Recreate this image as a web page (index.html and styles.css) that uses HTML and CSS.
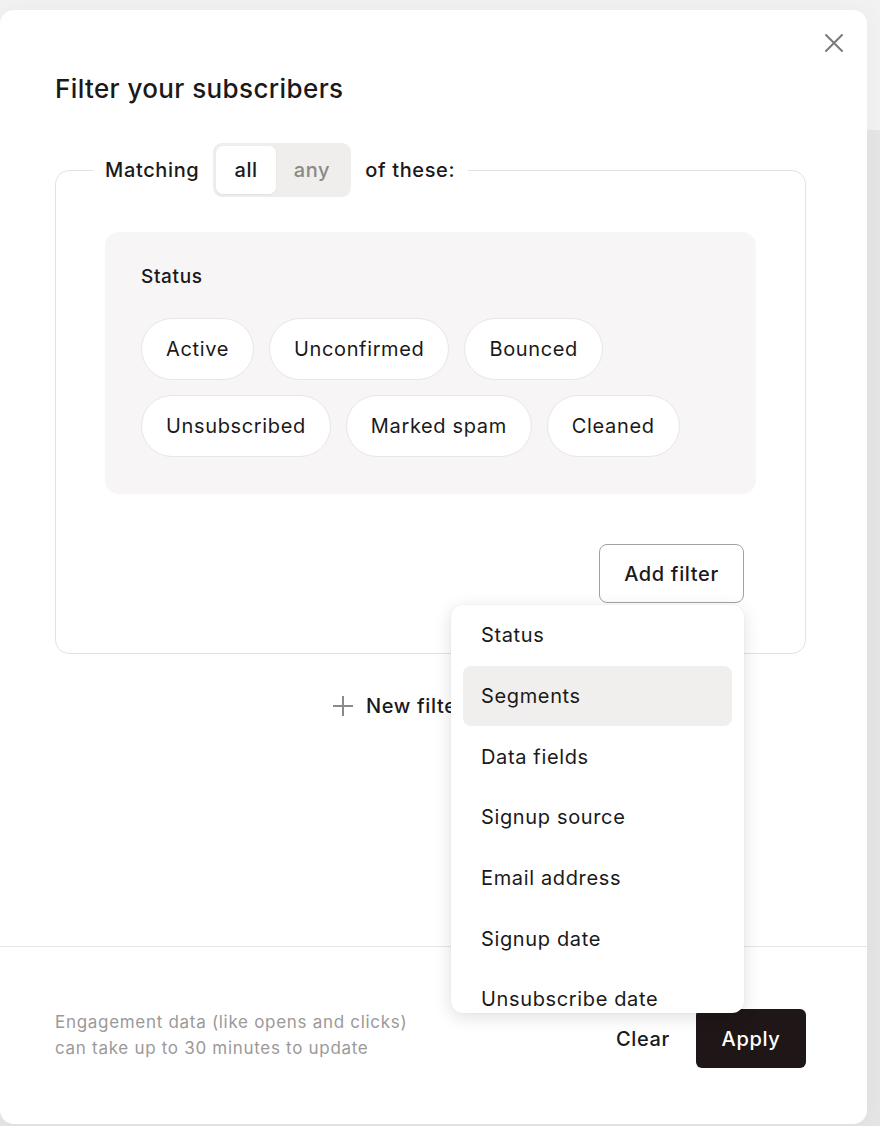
FILE: index.html
```html
<!DOCTYPE html>
<html lang="en">
<head>
<meta charset="utf-8">
<title>Filter your subscribers</title>
<link rel="stylesheet" href="styles.css">
</head>
<body>
<div class="modal">
  <div class="topbar">
    <button class="close" aria-label="Close">
      <svg width="20" height="20" viewBox="0 0 20 20"><path d="M2 2 L18 18 M18 2 L2 18" stroke="#7a7a7a" stroke-width="2" fill="none" stroke-linecap="round"/></svg>
    </button>
  </div>
  <div class="modal-body">
    <h1 class="title">Filter your subscribers</h1>
    <fieldset class="group">
      <legend class="group-legend">
        <span>Matching</span>
        <span class="toggle"><span class="seg seg-on">all</span><span class="seg">any</span></span>
        <span>of these:</span>
      </legend>
      <div class="filter-card">
        <div class="filter-label">Status</div>
        <div class="pills">
          <span class="pill">Active</span>
          <span class="pill">Unconfirmed</span>
          <span class="pill">Bounced</span>
          <span class="pill">Unsubscribed</span>
          <span class="pill">Marked spam</span>
          <span class="pill">Cleaned</span>
        </div>
      </div>
      <div class="add-row">
        <div class="add-wrap">
          <button class="add-btn">Add filter</button>
          <div class="menu">
            <div class="menu-item">Status</div>
            <div class="menu-item menu-item-on">Segments</div>
            <div class="menu-item">Data fields</div>
            <div class="menu-item">Signup source</div>
            <div class="menu-item">Email address</div>
            <div class="menu-item">Signup date</div>
            <div class="menu-item">Unsubscribe date</div>
          </div>
        </div>
      </div>
    </fieldset>
    <div class="new-filter">
      <svg width="22" height="22" viewBox="0 0 22 22"><path d="M11 1 V21 M1 11 H21" stroke="#8a8a8a" stroke-width="2" fill="none"/></svg>
      <span>New filter</span>
    </div>
  </div>
  <div class="modal-footer">
    <p class="note">Engagement data (like opens and clicks)<br>can take up to 30 minutes to update</p>
    <div class="actions">
      <button class="clear-btn">Clear</button>
      <button class="apply-btn">Apply</button>
    </div>
  </div>
</div>
</body>
</html>
```
FILE: styles.css
```css
* { box-sizing: border-box; }
html, body { margin: 0; padding: 0; }
body {
  width: 880px;
  height: 1126px;
  overflow: hidden;
  background: linear-gradient(to bottom, #f2f2f2 0, #f2f2f2 130px, #e6e5e5 130px, #e6e5e5 100%);
  font-family: Inter, "Noto Sans", sans-serif;
  color: #1b1919;
  letter-spacing: 0.04em;
}
button { font-family: inherit; letter-spacing: inherit; color: inherit; }

.modal {
  margin-top: 10px;
  width: 867px;
  height: 1114px;
  background: #fff;
  border-radius: 14px;
  display: flex;
  flex-direction: column;
  box-shadow: 0 0 24px rgba(0,0,0,0.04);
}

.topbar {
  display: flex;
  justify-content: flex-end;
  padding: 17px 17px 0 0;
}
.close {
  width: 32px;
  height: 32px;
  border: 0;
  background: transparent;
  padding: 0;
  display: flex;
  align-items: center;
  justify-content: center;
  cursor: pointer;
}

.modal-body {
  flex: 1;
  padding: 0 61px 0 55px;
}

.title {
  margin: 14px 0 0;
  font-size: 26px;
  line-height: 32px;
  font-weight: 500;
  letter-spacing: 0.015em;
}

.group {
  margin: 38px 0 0;
  border: 1px solid #e3e2e2;
  border-radius: 14px;
  padding: 35px 49px 50px 49px;
  min-width: 0;
}
.group-legend {
  margin-left: -12px;
  padding: 0 13px 0 12px;
  display: flex;
  align-items: center;
  gap: 14px;
  font-size: 20px;
  font-weight: 500;
}
.toggle {
  display: inline-flex;
  background: #efeeed;
  border-radius: 9px;
  padding: 3px;
  height: 54px;
}
.seg {
  display: flex;
  align-items: center;
  padding: 0 18px 0 18px;
  border-radius: 7px;
  color: #8a8888;
}
.seg-on {
  background: #fff;
  color: #1b1919;
  box-shadow: 0 1px 2px rgba(0,0,0,0.06);
}

.filter-card {
  background: #f7f5f5;
  border-radius: 14px;
  padding: 33px 36px 37px;
}
.filter-label {
  font-size: 19px;
  font-weight: 500;
  line-height: 24px;
}
.pills {
  margin-top: 29px;
  display: flex;
  flex-wrap: wrap;
  gap: 15px;
}
.pill {
  height: 62px;
  display: inline-flex;
  align-items: center;
  padding: 0 24px;
  background: #fff;
  border: 1.5px solid #e8e6e6;
  border-radius: 31px;
  font-size: 20px;
}

.add-row {
  margin-top: 50px;
  display: flex;
  justify-content: flex-end;
  padding-right: 12px;
}
.add-wrap { position: relative; }
.add-btn {
  width: 145px;
  height: 59px;
  border: 1.5px solid #a3a1a1;
  border-radius: 8px;
  background: #fff;
  font-size: 20px;
  font-weight: 500;
  cursor: pointer;
}
.menu {
  position: absolute;
  top: calc(100% + 2px);
  right: 0;
  width: 293px;
  height: 408px;
  overflow: hidden;
  background: #fff;
  border-radius: 12px;
  box-shadow: 0 4px 18px rgba(0,0,0,0.13), 0 0 2px rgba(0,0,0,0.06);
  padding: 0 12px;
  z-index: 10;
}
.menu-item {
  height: 60.67px;
  flex-shrink: 0;
  display: flex;
  align-items: center;
  padding-left: 18px;
  border-radius: 8px;
  font-size: 20px;
}
.menu-item-on { background: #f0efee; }

.new-filter {
  margin-top: 40px;
  margin-left: 277px;
  display: flex;
  align-items: center;
  gap: 12px;
  font-size: 20px;
  font-weight: 500;
  line-height: 24px;
}

.modal-footer {
  border-top: 1px solid #e6e5e5;
  padding: 62px 61px 0 55px;
  height: 178px;
  display: flex;
  justify-content: space-between;
  align-items: flex-start;
}
.note {
  margin: 0;
  font-size: 17px;
  line-height: 26px;
  color: #9b9999;
  letter-spacing: 0.7px;
}
.actions {
  display: flex;
  align-items: center;
  gap: 26px;
}
.clear-btn {
  border: 0;
  background: transparent;
  padding: 0;
  font-size: 20px;
  font-weight: 500;
  cursor: pointer;
}
.apply-btn {
  width: 110px;
  height: 59px;
  border: 0;
  border-radius: 6px;
  background: #1f1717;
  color: #fff;
  font-size: 20px;
  font-weight: 500;
  cursor: pointer;
}
```
